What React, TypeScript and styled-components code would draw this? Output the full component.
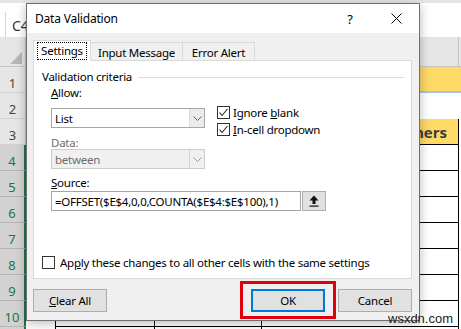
import React from 'react';
import styled, { createGlobalStyle } from 'styled-components';

const GlobalStyle = createGlobalStyle`
html, body {
  margin: 0;
  padding: 0;
  background: #fff;
}
`;

const UI_FONT = '"Noto Sans", "Open Sans", sans-serif';

const Screen = styled.div`
position: relative;
width: 461px;
height: 329px;
overflow: hidden;
background: #fff;
font-family: ${UI_FONT};`;

/* ---------- excel sheet behind the dialog ---------- */

const Sheet = styled.div`
display: flex;
flex-direction: column;
width: 520px;`;

const FormulaBar = styled.div`
height: 37px;
box-sizing: border-box;
border-top: 3px solid #e6e6e6;
display: flex;
align-items: flex-start;`;

const NameBox = styled.div`
margin: 9px 0 0 5px;
width: 60px;
height: 26px;
box-sizing: border-box;
border-left: 1px solid #d6d6d6;
padding-left: 6px;
display: flex;
align-items: center;
font-size: 14px;
color: #333;`;

const HeaderRow = styled.div`
display: flex;
height: 30px;
box-sizing: border-box;
background: #e6e6e6;
border-bottom: 1px solid #c4c4c4;`;

const Corner = styled.div`
width: 26px;
flex: none;
border-right: 1px solid #c4c4c4;
box-sizing: border-box;
display: flex;
align-items: flex-end;
justify-content: flex-end;
padding: 0 3px 2px 0;`;

const ColHead = styled.div<{ $w: number }>`
width: ${(p) => p.$w}px;
flex: none;
box-sizing: border-box;
border-right: 1px solid #c4c4c4;
display: flex;
align-items: center;
justify-content: center;
font-size: 13px;
color: #444;`;

const Row = styled.div`
display: flex;
height: 26px;
flex: none;`;

const RowHead = styled.div<{ $sel: boolean }>`
width: 26px;
flex: none;
box-sizing: border-box;
background: ${(p) => (p.$sel ? '#d2d2d2' : '#e6e6e6')};
color: ${(p) => (p.$sel ? '#217346' : '#444')};
border-bottom: 1px solid ${(p) => (p.$sel ? '#b4b4b4' : '#cfcfcf')};
border-right: ${(p) => (p.$sel ? '2px solid #217346' : '1px solid #c4c4c4')};
display: flex;
align-items: center;
justify-content: center;
padding-top: 7px;
font-size: 13px;`;

const Cell = styled.div<{ $w: number; $fill?: string; $boxed?: boolean; $under?: string }>`
width: ${(p) => p.$w}px;
flex: none;
box-sizing: border-box;
background: ${(p) => p.$fill || '#fff'};
border-right: ${(p) => (p.$boxed ? '1px solid #000' : 'none')};
border-bottom: ${(p) => (p.$under ? p.$under : p.$boxed ? '1px solid #000' : 'none')};
display: flex;
align-items: center;
justify-content: flex-end;
padding-right: 11px;
font-family: "Open Sans", "Noto Sans", sans-serif;
font-weight: 700;
font-size: 15px;
color: #3a3a3a;`;

const FirstTableCell = styled(Cell)`
border-left: 1px solid #000;`;

/* ---------- dialog ---------- */

const Dialog = styled.div`
position: absolute;
left: 26px;
top: 3px;
width: 394px;
height: 318px;
box-sizing: border-box;
border: 1px solid #707070;
background: #f0f0f0;
box-shadow: 0 2px 10px rgba(0, 0, 0, 0.28);
display: flex;
flex-direction: column;
font-size: 11.5px;
letter-spacing: -0.25px;
color: #000;`;

const TitleBar = styled.div`
height: 29px;
flex: none;
background: #fff;
display: flex;
align-items: center;
padding-left: 8px;`;

const Title = styled.div`
flex: 1;
font-size: 12px;
letter-spacing: -0.2px;`;

const TitleButton = styled.div`
width: 46px;
height: 29px;
display: flex;
align-items: center;
justify-content: center;
font-size: 13px;`;

const Body = styled.div`
flex: 1;
display: flex;
flex-direction: column;
padding: 8px 7px 0 6px;`;

const Tabs = styled.div`
display: flex;
align-items: flex-end;
height: 20px;
margin-bottom: -1px;
position: relative;
z-index: 1;`;

const Tab = styled.div<{ $w: number; $active?: boolean }>`
width: ${(p) => p.$w}px;
height: ${(p) => (p.$active ? 21 : 19)}px;
box-sizing: border-box;
border: 1px solid #d9d9d9;
border-bottom: ${(p) => (p.$active ? '1px solid #fff' : '1px solid #d9d9d9')};
background: ${(p) => (p.$active ? '#fff' : '#f0f0f0')};
display: flex;
align-items: center;
justify-content: center;
padding-top: 1px;
& + & { border-left: none; }`;

const Focus = styled.span`
outline: 1px dotted #000;
padding: 0 3px;
line-height: 16px;`;

const Panel = styled.div`
height: 219px;
box-sizing: border-box;
background: #fff;
border: 1px solid #d9d9d9;
display: flex;
flex-direction: column;
padding: 0 8px 9px 8px;`;

const GroupHead = styled.div`
display: flex;
align-items: center;
gap: 6px;
margin-top: 10px;
line-height: 12px;
height: 12px;
&::after {
  content: '';
  flex: 1;
  height: 1px;
  background: #dcdcdc;
  margin-right: -1px;
}`;

const Form = styled.div`
margin-left: 9px;
display: flex;
flex-direction: column;`;

const FieldRow = styled.div`
display: flex;
align-items: flex-start;`;

const Column = styled.div`
width: 154px;
display: flex;
flex-direction: column;`;

const Label = styled.div<{ $top: number; $disabled?: boolean }>`
margin-top: ${(p) => p.$top}px;
line-height: 12px;
height: 12px;
color: ${(p) => (p.$disabled ? '#6d6d6d' : '#000')};`;

const Combo = styled.div<{ $top: number; $disabled?: boolean }>`
margin-top: ${(p) => p.$top}px;
height: 20px;
box-sizing: border-box;
border: 1px solid ${(p) => (p.$disabled ? '#cccccc' : '#a6a6a6')};
background: ${(p) => (p.$disabled ? '#f0f0f0' : '#fff')};
color: ${(p) => (p.$disabled ? '#6d6d6d' : '#000')};
display: flex;
align-items: stretch;`;

const ComboText = styled.div`
flex: 1;
display: flex;
align-items: center;
padding-left: 3px;`;

const ComboArrow = styled.div<{ $disabled?: boolean }>`
width: 14px;
border-left: 1px solid ${(p) => (p.$disabled ? '#d6d6d6' : '#dcdcdc')};
background: ${(p) => (p.$disabled ? '#f0f0f0' : '#ececec')};
display: flex;
align-items: center;
justify-content: center;`;

const Checks = styled.div`
margin: 23px 0 0 12px;
display: flex;
flex-direction: column;
gap: 4px;`;

const CheckLine = styled.div`
display: flex;
align-items: center;
gap: 3px;
height: 13px;`;

const Box = styled.div`
width: 13px;
height: 13px;
flex: none;
box-sizing: border-box;
border: 1px solid #333;
background: #fff;
display: flex;
align-items: center;
justify-content: center;`;

const SourceRow = styled.div`
margin-top: 2px;
display: flex;
align-items: center;
gap: 1px;`;

const Input = styled.div`
width: 250px;
height: 20px;
box-sizing: border-box;
border: 1px solid #a6a6a6;
background: #fff;
display: flex;
align-items: center;
padding-left: 3px;
white-space: nowrap;
overflow: hidden;`;

const PickButton = styled.div`
width: 24px;
height: 20px;
box-sizing: border-box;
border: 1px solid #adadad;
background: #e1e1e1;
display: flex;
align-items: center;
justify-content: center;`;

const ApplyLine = styled(CheckLine)`
margin-top: auto;
gap: 5px;`;

const Buttons = styled.div`
display: flex;
align-items: center;
height: 38px;
margin-top: 2px;`;

const Button = styled.div<{ $default?: boolean }>`
width: 74px;
height: 23px;
box-sizing: border-box;
border: 1px solid ${(p) => (p.$default ? '#0078d7' : '#adadad')};
box-shadow: ${(p) => (p.$default ? 'inset 0 0 0 1px #0078d7' : 'none')};
background: #e1e1e1;
display: flex;
align-items: center;
justify-content: center;`;

const Spacer = styled.div`
flex: 1;`;

const Highlight = styled.div`
box-sizing: border-box;
height: 38px;
border: 3px solid #e3000e;
padding: 0 8px;
display: flex;
align-items: center;
margin-right: 2px;`;

const Watermark = styled.div`
position: absolute;
left: 388px;
top: 311px;
font-family: "Liberation Sans", Arial, sans-serif;
font-size: 13px;
color: #222;`;

const Chevron = ({ color }: { color: string }) => (
  <svg width="9" height="5" viewBox="0 0 9 5">
    <polyline points="0.5,0.5 4.5,4.5 8.5,0.5" fill="none" stroke={color} strokeWidth="1" />
  </svg>
);

const Tick = () => (
  <svg width="11" height="11" viewBox="0 0 11 11">
    <polyline points="1.5,5.5 4,8.5 9.5,2" fill="none" stroke="#222" strokeWidth="1.1" />
  </svg>
);

const Check = ({ on }: { on: boolean }) => <Box>{on ? <Tick /> : null}</Box>;

const cols = [29, 100, 107, 197, 60];
const letters = ['A', 'B', 'C', 'D', ''];

const SheetRow = ({ n }: { n: number }) => {
  const sel = n >= 4;
  const label = n <= 10 ? n : '';
  if (n === 1) {
    return (
      <Row>
        <RowHead $sel={sel}>{label}</RowHead>
        <Cell $w={cols[0]} />
        <Cell $w={cols[1]} />
        <Cell $w={cols[2]} />
        <Cell $w={cols[3]} $fill="#ffd966" $under="2px solid #a9c3e0" />
        <Cell $w={cols[4]} $fill="#ffd966" $under="2px solid #a9c3e0" />
      </Row>
    );
  }
  if (n === 2) {
    return (
      <Row>
        <RowHead $sel={sel}>{label}</RowHead>
        {cols.map((w, i) => <Cell key={i} $w={w} />)}
      </Row>
    );
  }
  return (
    <Row>
      <RowHead $sel={sel}>{label}</RowHead>
      <Cell $w={cols[0]} />
      <FirstTableCell $w={cols[1]} $boxed $fill={n === 3 ? '#ffd966' : undefined} />
      <Cell $w={cols[2]} $boxed $fill={n === 3 ? '#ffd966' : undefined} />
      <Cell $w={cols[3]} $boxed $fill={n === 3 ? '#ffd966' : undefined}>
        {n === 3 ? 'Customers' : null}
      </Cell>
      <Cell $w={cols[4]} />
    </Row>
  );
};

export default function App() {
  return (
    <>
      <GlobalStyle />
      <Screen>
        <Sheet>
          <FormulaBar>
            <NameBox>C4</NameBox>
          </FormulaBar>
          <HeaderRow>
            <Corner>
              <svg width="12" height="12" viewBox="0 0 12 12">
                <polygon points="0,12 12,12 12,0" fill="#b7b7b7" />
              </svg>
            </Corner>
            {cols.map((w, i) => (
              <ColHead key={i} $w={w}>{letters[i]}</ColHead>
            ))}
          </HeaderRow>
          {[1, 2, 3, 4, 5, 6, 7, 8, 9, 10, 11].map((n) => (
            <SheetRow key={n} n={n} />
          ))}
        </Sheet>

        <Dialog>
          <TitleBar>
            <Title>Data Validation</Title>
            <TitleButton>?</TitleButton>
            <TitleButton>
              <svg width="11" height="11" viewBox="0 0 11 11">
                <path d="M0.5 0.5 L10.5 10.5 M10.5 0.5 L0.5 10.5" stroke="#000" strokeWidth="1" />
              </svg>
            </TitleButton>
          </TitleBar>
          <Body>
            <Tabs>
              <Tab $w={58} $active><Focus>Settings</Focus></Tab>
              <Tab $w={92}>Input Message</Tab>
              <Tab $w={72}>Error Alert</Tab>
            </Tabs>
            <Panel>
              <GroupHead>Validation criteria</GroupHead>
              <Form>
                <FieldRow>
                  <Column>
                    <Label $top={4}><u>A</u>llow:</Label>
                    <Combo $top={9}>
                      <ComboText>List</ComboText>
                      <ComboArrow><Chevron color="#606060" /></ComboArrow>
                    </Combo>
                    <Label $top={9} $disabled>Data:</Label>
                    <Combo $top={0} $disabled>
                      <ComboText>between</ComboText>
                      <ComboArrow $disabled><Chevron color="#9a9a9a" /></ComboArrow>
                    </Combo>
                  </Column>
                  <Checks>
                    <CheckLine>
                      <Check on />
                      <span>Ignore <u>b</u>lank</span>
                    </CheckLine>
                    <CheckLine>
                      <Check on />
                      <span><u>I</u>n-cell dropdown</span>
                    </CheckLine>
                  </Checks>
                </FieldRow>
                <Label $top={8}><u>S</u>ource:</Label>
                <SourceRow>
                  <Input>=OFFSET($E$4,0,0,COUNTA($E$4:$E$100),1)</Input>
                  <PickButton>
                    <svg width="10" height="12" viewBox="0 0 10 12">
                      <polygon points="5,0.5 9.5,5.5 6.5,5.5 6.5,9 3.5,9 3.5,5.5 0.5,5.5" fill="#111" />
                      <rect x="0.5" y="10.5" width="9" height="1.2" fill="#111" />
                    </svg>
                  </PickButton>
                </SourceRow>
              </Form>
              <ApplyLine>
                <Check on={false} />
                <span>Ap<u>p</u>ly these changes to all other cells with the same settings</span>
              </ApplyLine>
            </Panel>
            <Buttons>
              <Button><span><u>C</u>lear All</span></Button>
              <Spacer />
              <Highlight>
                <Button $default>OK</Button>
              </Highlight>
              <Button>Cancel</Button>
            </Buttons>
          </Body>
        </Dialog>

        <Watermark>wsxdn.com</Watermark>
      </Screen>
    </>
  );
}
